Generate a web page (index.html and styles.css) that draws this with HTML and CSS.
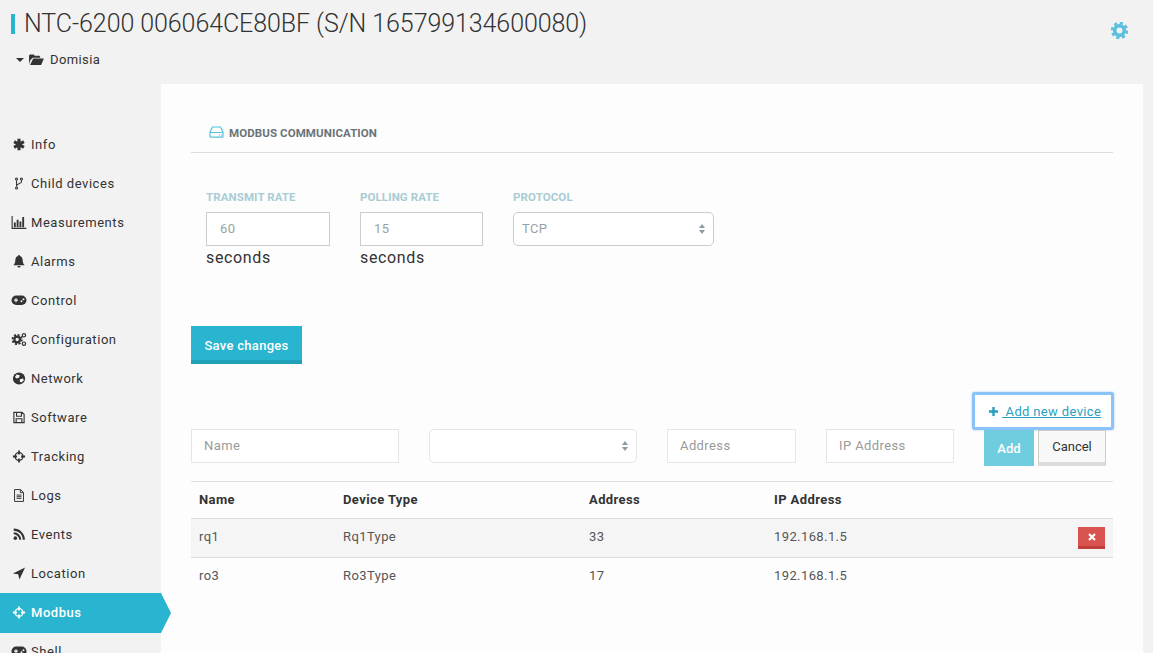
FILE: index.html
```html
<!DOCTYPE html>
<html lang="en">
<head>
  <meta charset="UTF-8">
  <title>NTC-6200 Modbus</title>
  <link rel="stylesheet" href="styles.css">
</head>
<body>

  <header class="page-header">
    <div class="title-row">
      <h1 class="title">NTC-6200 006064CE80BF (S/N 165799134600080)</h1>
      <svg class="gear" viewBox="0 0 16 16"><circle cx="8" cy="8" r="4.500" fill="none" stroke="#5bc0de" stroke-width="3.400"/><circle cx="8" cy="8" r="7" fill="none" stroke="#5bc0de" stroke-width="2.400" stroke-dasharray="3 2.500"/></svg>
    </div>
    <div class="group">
      <span class="caret"></span>
      <svg class="icon" viewBox="0 0 16 14"><path d="M0 12V2.500L1 1.500h4l1 1.500h5l1 1V5H4L1.500 7.500 0 12zM4.500 6H16l-3 7H1z" fill="#333"/></svg>
      <span>Domisia</span>
    </div>
  </header>

  <div class="layout">
    <nav class="sidebar">
      <a class="nav-item"><svg class="icon" viewBox="0 0 16 16"><path d="M8 1v14M2 4.500l12 7M14 4.500l-12 7" stroke="#333" stroke-width="3.800"/></svg>Info</a>
      <a class="nav-item"><svg class="icon" viewBox="0 0 16 16"><g fill="none" stroke="#333" stroke-width="1.300"><circle cx="5" cy="2.500" r="1.300"/><circle cx="11" cy="2.500" r="1.300"/><circle cx="5" cy="13.500" r="1.300"/><path d="M5 4v8M11 4v2c0 2-6 2-6 5"/></g></svg>Child devices</a>
      <a class="nav-item"><svg class="icon" viewBox="0 0 16 14"><path d="M.6 0v13.300H16" fill="none" stroke="#333" stroke-width="1.200"/><path d="M3.500 7v5M6.500 4v8M9.500 6v6M12.500 1v11" fill="none" stroke="#333" stroke-width="2"/></svg>Measurements</a>
      <a class="nav-item"><svg class="icon" viewBox="0 0 16 16"><path d="M8 0a1 1 0 0 1 1 1.300C11.500 2 12.500 4 12.500 6.500c0 3 1 4.500 2.500 6H1c1.500-1.500 2.500-3 2.500-6C3.500 4 4.500 2 7 1.300A1 1 0 0 1 8 0zM6 13.500h4a2 2 0 0 1-4 0z" fill="#333"/></svg>Alarms</a>
      <a class="nav-item"><svg class="icon" viewBox="0 2 16 12"><rect x=".5" y="3" width="15" height="9.500" rx="4.700" fill="#333"/><path d="M3 7.700h4M5 5.700v4" stroke="#f2f2f2" stroke-width="1.200"/><circle cx="10.500" cy="8.800" r="1" fill="#f2f2f2"/><circle cx="12.500" cy="6.800" r="1" fill="#f2f2f2"/></svg>Control</a>
      <a class="nav-item"><svg class="icon" viewBox="0 1 16 14"><g fill="none" stroke="#333"><circle cx="6" cy="8" r="3" stroke-width="2.400"/><circle cx="6" cy="8" r="5" stroke-width="2" stroke-dasharray="2.200 1.700"/><circle cx="13.300" cy="3.500" r="1.800" stroke-width="1.300"/><circle cx="13.300" cy="12.500" r="1.800" stroke-width="1.300"/></g></svg>Configuration</a>
      <a class="nav-item"><svg class="icon" viewBox="0 0 16 16"><circle cx="8" cy="8" r="7.500" fill="#333"/><path d="M5 3l4 1-1 3-3 1-2-2zM9 9l4-1 1 2-3 3-2-1z" fill="#f2f2f2"/></svg>Network</a>
      <a class="nav-item"><svg class="icon" viewBox="0 0 16 16"><path d="M1.700 1.700h10L14.300 4v10.300H1.700V1.700zM5 2v4.500h6V2M4.500 14V9.500h7V14" fill="none" stroke="#333" stroke-width="1.400"/></svg>Software</a>
      <a class="nav-item"><svg class="icon" viewBox="0 0 16 16"><circle cx="8" cy="8" r="4.800" fill="none" stroke="#333" stroke-width="1.700"/><path d="M8 .5v5M8 10.500v5M.5 8h5M10.500 8h5" stroke="#333" stroke-width="2.200"/></svg>Tracking</a>
      <a class="nav-item"><svg class="icon" viewBox="0 0 16 16"><path d="M2.500.7h7.500l3.500 3.500v11.100h-11zM9.700 1v3.500h3.500M5 7.500h6M5 9.500h6M5 11.500h6" fill="none" stroke="#333" stroke-width="1.200"/></svg>Logs</a>
      <a class="nav-item"><svg class="icon" viewBox="0 0 16 16"><circle cx="3.500" cy="12.500" r="2.200" fill="#333"/><path d="M1.500 6.500a8 8 0 0 1 8 8M1.500 2a12.500 12.500 0 0 1 12.500 12.500" fill="none" stroke="#333" stroke-width="2.500"/></svg>Events</a>
      <a class="nav-item"><svg class="icon" viewBox="0 0 16 16"><path d="M15.500.5L8.500 15.500 7 9 .5 8z" fill="#333"/></svg>Location</a>
      <a class="nav-item active"><svg class="icon" viewBox="0 0 16 16"><circle cx="8" cy="8" r="4.800" fill="none" stroke="#fff" stroke-width="1.700"/><path d="M8 .5v5M8 10.500v5M.5 8h5M10.500 8h5" stroke="#fff" stroke-width="2.200"/></svg>Modbus</a>
      <a class="nav-item"><svg class="icon" viewBox="0 2 16 12"><rect x=".5" y="3" width="15" height="9.500" rx="4.700" fill="#333"/><path d="M3 7.700h4M5 5.700v4" stroke="#f2f2f2" stroke-width="1.200"/><circle cx="10.500" cy="8.800" r="1" fill="#f2f2f2"/><circle cx="12.500" cy="6.800" r="1" fill="#f2f2f2"/></svg>Shell</a>
    </nav>

    <main class="panel">
      <div class="section-head">
        <svg class="hdd" viewBox="0 0 15 12"><path d="M3.500 1h8L14 6v4.500a.6.600 0 0 1-.6.600H1.600a.6.600 0 0 1-.6-.6V6zM1 6.500h13M10 9h1M12 9h1" fill="none" stroke="#5bc0de" stroke-width="1.200"/></svg>
        <span>MODBUS COMMUNICATION</span>
      </div>

      <div class="settings">
        <div class="field field-rate">
          <label>TRANSMIT RATE</label>
          <input class="input" value="60">
          <span class="unit">seconds</span>
        </div>
        <div class="field field-poll">
          <label>POLLING RATE</label>
          <input class="input" value="15">
          <span class="unit">seconds</span>
        </div>
        <div class="field field-proto">
          <label>PROTOCOL</label>
          <div class="select-wrap">
            <select class="select"><option>TCP</option></select>
          </div>
        </div>
      </div>

      <button class="btn-save">Save changes</button>

      <div class="add-link-row">
        <a class="add-link" href="#"><svg class="plus" viewBox="0 0 12 12"><path d="M6 1v10M1 6h10" stroke="#2a9fc0" stroke-width="2.600"/></svg><span>&nbsp;Add new device</span></a>
      </div>

      <form class="add-form">
        <input class="input-light w-name" placeholder="Name">
        <div class="select-wrap select-light w-type">
          <select class="select"><option></option></select>
        </div>
        <input class="input-light w-addr" placeholder="Address">
        <input class="input-light w-ip" placeholder="IP Address">
        <button type="button" class="btn-add">Add</button>
        <button type="button" class="btn-cancel">Cancel</button>
      </form>

      <table class="devices">
        <thead>
          <tr><th class="col-name">Name</th><th class="col-type">Device Type</th><th class="col-addr">Address</th><th>IP Address</th><th class="col-del"></th></tr>
        </thead>
        <tbody>
          <tr class="odd"><td>rq1</td><td>Rq1Type</td><td>33</td><td>192.168.1.5</td><td class="cell-del"><button class="btn-del"><svg viewBox="0 0 10 10"><path d="M2 2l6 6M8 2l-6 6" stroke="#fff" stroke-width="2.200"/></svg></button></td></tr>
          <tr><td>ro3</td><td>Ro3Type</td><td>17</td><td>192.168.1.5</td><td></td></tr>
        </tbody>
      </table>
    </main>
  </div>

</body>
</html>
```

FILE: styles.css
```css
* {
  box-sizing: border-box;
}

html, body {
  height: 653px;
  overflow: hidden;
}

body {
  margin: 0;
  background: #f2f2f2;
  color: #333;
  font-family: Roboto, "Liberation Sans", sans-serif;
  font-size: 13px;
  letter-spacing: 0.4px;
}

/* header */
.page-header {
  height: 84px;
  padding: 14px 0 0 11px;
}

.title-row {
  display: flex;
  justify-content: space-between;
  align-items: flex-start;
  padding-right: 25px;
}

.title {
  margin: 0;
  padding-left: 9px;
  border-left: 4px solid #29b4d0;
  font-size: 25px;
  font-weight: 300;
  line-height: 20px;
  letter-spacing: -0.08px;
  white-space: nowrap;
  color: #333;
}

.gear {
  width: 17px;
  height: 17px;
  margin-top: 8px;
}

.group {
  display: flex;
  align-items: center;
  gap: 4px;
  margin-top: 13px;
  padding-left: 5px;
}

.caret {
  width: 0;
  height: 0;
  border: 4px solid transparent;
  border-top: 4px solid #333;
  border-bottom: 0;
  margin-right: 1px;
}

.group .icon {
  width: 15px;
  height: 13px;
  margin-right: 2px;
}

/* layout */
.layout {
  display: flex;
  height: 569px;
}

.sidebar {
  width: 161px;
  flex-shrink: 0;
  padding-top: 41px;
}

.nav-item {
  position: relative;
  display: flex;
  align-items: center;
  gap: 4px;
  height: 39px;
  padding-left: 11px;
  letter-spacing: 0.55px;
}

.nav-item .icon {
  width: 16px;
  height: 13px;
  flex-shrink: 0;
}

.nav-item.active {
  height: 40px;
  margin-bottom: -1px;
  padding-bottom: 1px;
  background: #29b4d0;
  color: #fff;
  font-weight: 500;
}

.nav-item.active::after {
  content: "";
  position: absolute;
  left: 100%;
  top: 0;
  border-left: 10px solid #29b4d0;
  border-top: 20px solid transparent;
  border-bottom: 20px solid transparent;
}

.panel {
  width: 982px;
  background: #fdfdfd;
  padding: 0 30px;
}

.section-head {
  display: flex;
  align-items: center;
  gap: 5px;
  height: 69px;
  padding: 30px 0 0 18px;
  border-bottom: 1px solid #ddd;
  font-size: 11.5px;
  font-weight: 700;
  letter-spacing: 0.1px;
  color: #6a7377;
}

.hdd {
  width: 15px;
  height: 12px;
  margin-top: -2px;
}

/* settings */
.settings {
  display: flex;
  margin: 37px 0 0 15px;
  height: 81px;
}

.field {
  display: flex;
  flex-direction: column;
}

.field-rate {
  width: 154px;
}

.field-poll {
  width: 153px;
}

.field-proto {
  width: 201px;
}

.field label {
  height: 22px;
  font-size: 11.5px;
  font-weight: 700;
  line-height: 15px;
  letter-spacing: 0.1px;
  color: #a9ccd3;
}

.input {
  width: 124px;
  height: 34px;
  padding: 0 13px 2px;
  border: 1px solid #ccc;
  background: #fff;
  font: inherit;
  letter-spacing: inherit;
  color: #95a3a8;
}

.field-poll .input {
  width: 123px;
}

.unit {
  font-size: 16px;
  line-height: 24px;
  letter-spacing: 0.65px;
}

.select-wrap {
  position: relative;
  height: 34px;
}

.select-wrap::before,
.select-wrap::after {
  content: "";
  position: absolute;
  right: 9px;
  border-left: 3px solid transparent;
  border-right: 3px solid transparent;
}

.select-wrap::before {
  top: 12px;
  border-bottom: 4px solid #8a9ba1;
}

.select-wrap::after {
  top: 18px;
  border-top: 4px solid #8a9ba1;
}

.select {
  display: block;
  width: 100%;
  height: 100%;
  padding: 0 8px 2px;
  appearance: none;
  border: 1px solid #ccc;
  border-radius: 5px;
  background: #fff;
  font: inherit;
  letter-spacing: inherit;
  color: #95a3a8;
}

.btn-save {
  display: block;
  width: 111px;
  height: 38px;
  margin-top: 55px;
  padding: 4px 0 0;
  border: 0;
  border-bottom: 4px solid #21a0ba;
  background: #29b4d0;
  color: #fff;
  font: inherit;
  font-weight: 500;
  letter-spacing: 0.3px;
}

/* add device */
.add-link-row {
  display: flex;
  justify-content: flex-end;
  margin: 28px -1px 0 0;
}

.add-link {
  display: flex;
  align-items: center;
  gap: 3px;
  width: 142px;
  height: 38px;
  padding: 1px 0 0 13px;
  border: 3px solid #8cc2fa;
  border-radius: 3px;
  box-shadow: 0 0 2px #8cc2fa;
  background: #fff;
  color: #2a9fc0;
  letter-spacing: 0.35px;
}

.add-link span {
  text-decoration: underline;
}

.plus {
  width: 11px;
  height: 11px;
}

.add-form {
  display: flex;
  height: 52px;
  margin-top: -1px;
}

.input-light {
  height: 34px;
  padding: 0 12px 2px;
  border: 1px solid #e6e6e6;
  background: #fff;
  font: inherit;
  letter-spacing: inherit;
}

.input-light::placeholder {
  color: #9a9a9a;
  opacity: 1;
}

.w-name {
  width: 208px;
  margin-right: 30px;
}

.w-type {
  width: 208px;
  margin-right: 30px;
}

.select-light .select {
  border-color: #e6e6e6;
}

.w-addr {
  width: 129px;
  margin-right: 30px;
}

.w-ip {
  width: 128px;
  margin-right: 30px;
}

.btn-add {
  width: 50px;
  height: 36px;
  margin: 1px 4px 0 0;
  border: 0;
  background: #70cde0;
  color: #fff;
  font: inherit;
  font-weight: 500;
}

.btn-cancel {
  width: 68px;
  height: 36px;
  margin-top: 1px;
  border: 1px solid #ccc;
  border-bottom: 4px solid #ddd;
  background: #f8f8f8;
  color: #333;
  font: inherit;
}

/* table */
.devices {
  width: 100%;
  border-collapse: collapse;
  table-layout: fixed;
}

.devices th,
.devices td {
  height: 39px;
  padding: 0 8px;
  border-bottom: 1px solid #ddd;
  text-align: left;
}

.devices th {
  height: 37px;
  padding-bottom: 2px;
  border-top: 1px solid #ddd;
  font-weight: 700;
}

.devices td {
  padding-bottom: 3px;
  color: #555;
}

.devices tbody tr:last-child td {
  border-bottom: 0;
}

.odd td {
  background: #f5f5f5;
}

.col-name {
  width: 144px;
}

.col-type {
  width: 246px;
}

.col-addr {
  width: 185px;
}

.devices .cell-del {
  padding-bottom: 0;
  text-align: right;
}

.btn-del {
  display: inline-flex;
  align-items: center;
  justify-content: center;
  width: 27px;
  height: 22px;
  padding: 0;
  vertical-align: middle;
  border: 0;
  border-bottom: 3px solid #c03f3c;
  background: #d9534f;
}

.btn-del svg {
  width: 10px;
  height: 10px;
}
```
